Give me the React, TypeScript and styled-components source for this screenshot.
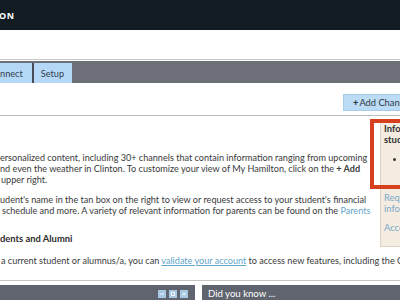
import React from 'react';
import styled, { createGlobalStyle } from 'styled-components';

const GlobalStyle = createGlobalStyle`
  html, body {
    margin: 0;
    padding: 0;
    overflow: hidden;
    background: #ffffff;
  }
  body {
    font-family: Lato, "Open Sans", sans-serif;
    color: #3a3a3a;
  }
`;

const Page = styled.div`
  width: 400px;
  height: 300px;
  overflow: hidden;
  background: #ffffff;
`;

const Masthead = styled.header`
  height: 30px;
  background: #131b23;
  display: flex;
  align-items: center;
`;

const Wordmark = styled.span`
  color: #ffffff;
  font-family: "Open Sans", sans-serif;
  font-weight: 700;
  font-size: 9px;
  letter-spacing: 0.6px;
  margin-left: -1px;
`;

const TopSpace = styled.div`
  height: 29px;
`;

const Rule = styled.div<{ $color?: string }>`
  height: 1px;
  background: ${(p) => p.$color ?? '#c4c4c4'};
`;

const TabBar = styled.nav`
  margin-top: 1px;
  height: 22px;
  background: #6d7079;
  display: flex;
  align-items: flex-end;
`;

const Tab = styled.a<{ $first?: boolean }>`
  height: 20px;
  display: flex;
  align-items: center;
  padding: ${(p) => (p.$first ? '0 9px 0 0' : '0 8px 0 7px')};
  background: #b5d8f6;
  color: #33404f;
  font-size: 9.2px;
  border-left: ${(p) => (p.$first ? 'none' : '2px solid #474b55')};
  text-decoration: none;
`;

const Toolbar = styled.div`
  height: 32px;
  display: flex;
  justify-content: flex-end;
  align-items: flex-start;
`;

const AddButton = styled.button`
  margin-top: 11px;
  margin-right: -60px;
  height: 17px;
  width: 117px;
  padding: 0 0 0 9px;
  border: 1px solid #a8cde9;
  background: #bcdcf5;
  color: #2d3946;
  font-family: Lato, sans-serif;
  font-size: 9.3px;
  text-align: left;
  white-space: nowrap;

  b {
    font-weight: 900;
    margin-right: 1px;
  }
`;

const Content = styled.section`
  position: relative;
  height: 164px;
`;

const Sidebar = styled.aside`
  float: right;
  position: relative;
  margin-top: 3px;
  margin-right: -60px;
  width: 80px;
  height: 128px;
  box-sizing: border-box;
  background: #f4ece0;
  border: 1px solid #ddd3c3;
  padding: 3px 0 0 3px;
  font-size: 9.4px;
  line-height: 11px;
`;

const Highlight = styled.div`
  position: absolute;
  left: -11px;
  top: -1px;
  right: -4px;
  height: 62px;
  border: 4px solid #d6401f;
  pointer-events: none;
`;

const SideTitle = styled.div`
  font-weight: 700;
  color: #2e2e2e;
  white-space: nowrap;
`;

const SideList = styled.ul`
  margin: 9px 0 0 0;
  padding: 0 0 0 22px;
  list-style: disc;
  white-space: nowrap;
`;

const SideLink = styled.a<{ $gap?: number }>`
  display: block;
  margin-top: ${(p) => p.$gap ?? 0}px;
  color: #7aa8cb;
  text-decoration: none;
  white-space: nowrap;
`;

const Main = styled.div`
  padding-top: 36px;
  font-size: 9.1px;
  line-height: 11px;
  font-weight: 400;
`;

const Para = styled.p<{ $gap?: number }>`
  margin: ${(p) => p.$gap ?? 0}px 0 0 0;
`;

const Line = styled.span<{ $indent?: number }>`
  display: block;
  white-space: nowrap;
  padding-left: ${(p) => p.$indent ?? 0}px;
`;

const Heading = styled.h3`
  margin: 17px 0 0 0;
  font-size: 9.4px;
  line-height: 11px;
  font-weight: 700;
  color: #2b2b2b;
  white-space: nowrap;
`;

const Link = styled.a<{ $underline?: boolean }>`
  color: #63a6ca;
  text-decoration: ${(p) => (p.$underline ? 'underline' : 'none')};
`;

const Footer = styled.div`
  margin-top: 4px;
  display: flex;
  gap: 7px;
`;

const Panel = styled.div<{ $grow?: boolean }>`
  height: 18px;
  background: #5f646e;
  display: flex;
  align-items: flex-start;
  ${(p) => (p.$grow ? 'flex: 1;' : 'width: 195px;')}
`;

const PanelTitle = styled.span`
  color: #ffffff;
  font-size: 9.6px;
  margin: 3px 0 0 6px;
`;

const PanelTools = styled.div`
  margin: 5px 7px 0 auto;
  display: flex;
  gap: 3px;
`;

const ToolIcon = styled.span`
  width: 8px;
  height: 8px;
  background: #a9c8e4;
  display: flex;
  align-items: center;
  justify-content: center;
`;

export default function App() {
  return (
    <Page>
      <GlobalStyle />
      <Masthead>
        <Wordmark>ON</Wordmark>
      </Masthead>
      <TopSpace />
      <Rule $color="#c9c9c9" />
      <TabBar>
        <Tab $first>nnect</Tab>
        <Tab>Setup</Tab>
      </TabBar>
      <Toolbar>
        <AddButton>
          <b>+</b>Add Channels
        </AddButton>
      </Toolbar>
      <Rule $color="#bdbdbd" />
      <Content>
        <Sidebar>
          <Highlight />
          <SideTitle>Information for</SideTitle>
          <SideTitle>students</SideTitle>
          <SideList>
            <li>Parents</li>
          </SideList>
          <SideLink $gap={27}>Request access</SideLink>
          <SideLink>information</SideLink>
          <SideLink $gap={8}>Access</SideLink>
        </Sidebar>
        <Main>
          <Para>
            <Line>ersonalized content, including 30+ channels that contain information ranging from upcoming</Line>
            <Line>
              nd even the weather in Clinton. To customize your view of My Hamilton, click on the <b>+ Add</b>
            </Line>
            <Line $indent={1}>upper right.</Line>
          </Para>
          <Para $gap={9}>
            <Line>udent's name in the tan box on the right to view or request access to your student's financial</Line>
            <Line $indent={2}>
              schedule and more. A variety of relevant information for parents can be found on the{' '}
              <Link>Parents</Link>
            </Line>
          </Para>
          <Heading>dents and Alumni</Heading>
          <Para $gap={11}>
            <Line $indent={1}>
              a current student or alumnus/a, you can <Link $underline>validate your account</Link> to access new
              features, including the Connect tab
            </Line>
          </Para>
        </Main>
      </Content>
      <Rule $color="#c6c6c6" />
      <Footer>
        <Panel>
          <PanelTools>
            <ToolIcon>
              <svg width="6" height="6" viewBox="0 0 6 6">
                <path d="M1 3h4" stroke="#eef5fb" strokeWidth="1" />
              </svg>
            </ToolIcon>
            <ToolIcon>
              <svg width="6" height="6" viewBox="0 0 6 6">
                <rect x="1.5" y="1.5" width="3" height="3" fill="none" stroke="#eef5fb" strokeWidth="1" />
              </svg>
            </ToolIcon>
            <ToolIcon>
              <svg width="6" height="6" viewBox="0 0 6 6">
                <path d="M1.5 1.5l3 3M4.5 1.5l-3 3" stroke="#eef5fb" strokeWidth="1" />
              </svg>
            </ToolIcon>
          </PanelTools>
        </Panel>
        <Panel $grow>
          <PanelTitle>Did you know ...</PanelTitle>
        </Panel>
      </Footer>
    </Page>
  );
}
